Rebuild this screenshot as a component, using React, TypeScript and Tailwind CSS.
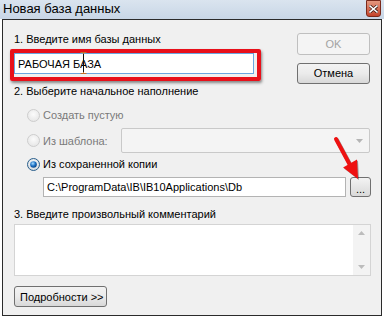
import React from "react";

const font = { fontFamily: '"Liberation Sans", Arial, sans-serif' };

function Radio({ checked, disabled }: { checked?: boolean; disabled?: boolean }) {
  return (
    <svg width="13" height="13" viewBox="0 0 13 13" className="shrink-0">
      <defs>
        <radialGradient id={checked ? "rg-on" : "rg-off"} cx="50%" cy="40%" r="60%">
          <stop offset="0%" stopColor={disabled ? "#fbfbfb" : "#ffffff"} />
          <stop offset="100%" stopColor={disabled ? "#e6e6e6" : "#d4d9de"} />
        </radialGradient>
        <radialGradient id="dot" cx="40%" cy="35%" r="70%">
          <stop offset="0%" stopColor="#a8dcff" />
          <stop offset="55%" stopColor="#1a6fc4" />
          <stop offset="100%" stopColor="#0b3e7a" />
        </radialGradient>
      </defs>
      <circle
        cx="6.5"
        cy="6.5"
        r="6"
        fill={`url(#${checked ? "rg-on" : "rg-off"})`}
        stroke={disabled ? "#cdcdcd" : "#2a5f8c"}
        strokeWidth="1"
      />
      {checked && <circle cx="6.5" cy="6.5" r="3.3" fill="url(#dot)" />}
    </svg>
  );
}

export default function App() {
  return (
    <div className="relative w-[384px] h-[318px] bg-white overflow-hidden text-black" style={font}>
      {/* title bar */}
      <div className="h-[19px] flex items-start justify-between bg-gradient-to-b from-[#dae4ef] to-[#c8d6e6]">
        <span className="pl-[3px] pt-[1px] text-[13px] leading-[16px]">Новая база данных</span>
        <div className="mr-[3px] w-[15px] h-[17px] rounded-b-[3px] border border-[#7a2a1c] bg-gradient-to-b from-[#e4977f] to-[#c4432a] flex items-center justify-center">
          <svg width="9" height="8" viewBox="0 0 9 8">
            <path d="M1 1 L8 7 M8 1 L1 7" stroke="#3a1a14" strokeWidth="3" strokeLinecap="square" />
            <path d="M1 1 L8 7 M8 1 L1 7" stroke="#ffffff" strokeWidth="1.6" strokeLinecap="square" />
          </svg>
        </div>
      </div>

      {/* client area */}
      <div className="ml-[2px] w-[380px] h-[297px] border border-[#2b2b2b] bg-[#f0f0f0] text-[11px] leading-[14px] whitespace-nowrap">
        <div className="h-[64px] flex justify-between">
          <div className="pl-[11px] pt-[12px]">
            <div>1. Введите имя базы данных</div>
            <div className="mt-[7px] w-[240px] h-[21px] border border-[#6aa6e0] bg-white flex items-center pl-[3px]">
              РАБОЧАЯ БАЗА
            </div>
          </div>
          <div className="pr-[11px] pt-[13px] flex flex-col gap-[8px]">
            <button className="w-[73px] h-[22px] rounded-[3px] border border-[#bfbfbf] bg-[#f4f4f4] text-[#a3a3a3]">
              OK
            </button>
            <button className="w-[73px] h-[22px] rounded-[3px] border border-[#707070] bg-gradient-to-b from-[#f3f3f3] via-[#ebebeb] to-[#d8d8d8]">
              Отмена
            </button>
          </div>
        </div>

        <div className="pl-[11px]">2. Выберите начальное наполнение</div>

        <div className="mt-[10px] pl-[24px] h-[14px] flex items-center gap-[3px] text-[#7a7a7a]">
          <Radio disabled />
          <span>Создать пустую</span>
        </div>

        <div className="mt-[6px] pl-[24px] h-[25px] flex items-center text-[#7a7a7a]">
          <Radio disabled />
          <span className="ml-[3px] w-[78px]">Из шаблона:</span>
          <div className="w-[249px] h-[25px] rounded-[2px] border border-[#c9c9c9] bg-[#f4f4f4] flex items-center justify-end pr-[6px]">
            <svg width="7" height="4" viewBox="0 0 7 4">
              <path d="M0 0 H7 L3.5 4 Z" fill="#b5b5b5" />
            </svg>
          </div>
        </div>

        <div className="mt-[4px] pl-[24px] h-[14px] flex items-center gap-[3px]">
          <Radio checked />
          <span>Из сохраненной копии</span>
        </div>

        <div className="mt-[6px] pl-[40px] h-[20px] flex gap-[4px]">
          <div className="w-[303px] h-[20px] border border-[#b3b3b3] bg-white flex items-center pl-[3px]">
            C:\ProgramData\IB\IB10Applications\Db
          </div>
          <button className="w-[21px] h-[20px] rounded-[3px] border border-[#707070] bg-gradient-to-b from-[#f3f3f3] to-[#d9d9d9] text-[11px] leading-[10px] pt-[4px]">
            ...
          </button>
        </div>

        <div className="mt-[10px] pl-[11px]">3. Введите произвольный комментарий</div>

        <div className="mt-[3px] ml-[11px] w-[357px] h-[52px] border border-[#d4d4d4] bg-white flex justify-end">
          <div className="w-[17px] h-full bg-[#f3f3f3] flex flex-col items-center justify-between py-[6px]">
            <svg width="7" height="4" viewBox="0 0 7 4">
              <path d="M0 4 H7 L3.5 0 Z" fill="#bcbcbc" />
            </svg>
            <svg width="7" height="4" viewBox="0 0 7 4">
              <path d="M0 0 H7 L3.5 4 Z" fill="#bcbcbc" />
            </svg>
          </div>
        </div>

        <button className="mt-[10px] ml-[11px] w-[93px] h-[21px] rounded-[3px] border border-[#707070] bg-gradient-to-b from-[#f3f3f3] via-[#ebebeb] to-[#d8d8d8] text-left pl-[5px]">
          Подробности &gt;&gt;
        </button>
      </div>

      {/* annotation: red frame round the name field */}
      <div className="absolute left-[10px] top-[49px] w-[251px] h-[32px] rounded-[2px] border-[4px] border-[#e8101a] shadow-[1px_2px_3px_rgba(0,0,0,0.45)]" />

      {/* text cursor */}
      <svg className="absolute left-[80px] top-[52px]" width="7" height="22" viewBox="0 0 7 22">
        <path d="M0.5 0.5 H6.5 M3.5 0.5 V21.5 M0.5 21.5 H6.5" stroke="#c8702a" strokeWidth="1" fill="none" />
        <path d="M3.5 2 V20" stroke="#111" strokeWidth="1" />
      </svg>

      {/* annotation: red arrow to the browse button */}
      <svg className="absolute left-0 top-0 pointer-events-none" width="384" height="318" viewBox="0 0 384 318">
        <g transform="translate(1,1)" opacity="0.35">
          <path d="M336 139 L350 165" stroke="#000" strokeWidth="4" strokeLinecap="round" />
          <path d="M358 179 L357 159.6 L343.1 167.4 Z" fill="#000" />
        </g>
        <path d="M336 139 L350 165" stroke="#ee1111" strokeWidth="4" strokeLinecap="round" />
        <path d="M358 179 L357 159.6 L343.1 167.4 Z" fill="#ee1111" />
      </svg>
    </div>
  );
}
